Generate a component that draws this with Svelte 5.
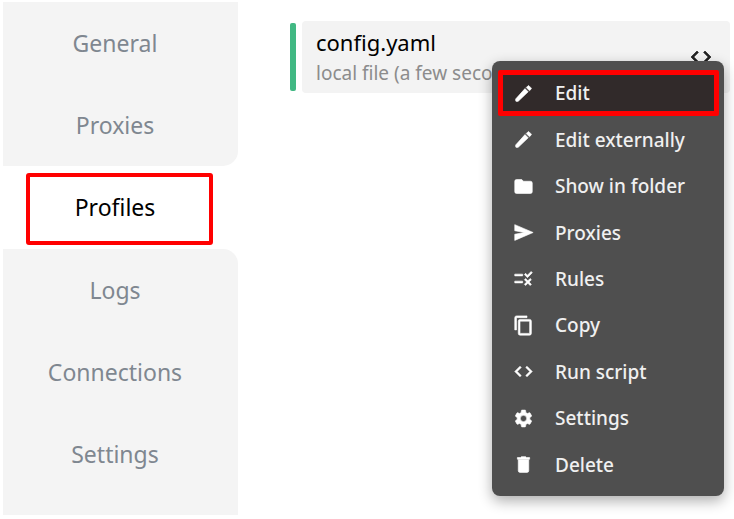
<script>
  const pages = ['General', 'Proxies', 'Profiles', 'Logs', 'Connections', 'Settings'];
  let current = $state('Profiles');

  const pencil =
    'M3.500 17.800a1 1 0 0 0-.5.9V20a1 1 0 0 0 1 1h1.300a1.500 1.500 0 0 0 1-.4L17.400 10.100l-3.700-3.700zM20.700 7a1 1 0 0 0 0-1.400l-2.300-2.300a1 1 0 0 0-1.400 0l-1.900 1.900 3.700 3.700z';
  const code =
    'M9.4 16.6 4.8 12l4.6-4.6L8 6l-6 6 6 6zM14.6 16.6l4.6-4.6-4.6-4.6L16 6l6 6-6 6z';

  const actions = [
    { label: 'Edit', icon: pencil },
    { label: 'Edit externally', icon: pencil },
    {
      label: 'Show in folder',
      icon: 'M10 4H4a2 2 0 0 0-2 2v12a2 2 0 0 0 2 2h16a2 2 0 0 0 2-2V8a2 2 0 0 0-2-2h-8z'
    },
    { label: 'Proxies', icon: 'M2 21 23 12 2 3v7l11 2-11 2z' },
    {
      label: 'Rules',
      icon: 'M16.5 11 13 7.5l1.4-1.4 2.1 2.1L20.7 4l1.4 1.4zM11 7H2v2h9zM21 13.4 19.6 12 17 14.6 14.4 12 13 13.4l2.6 2.6-2.6 2.6 1.4 1.4 2.6-2.6 2.6 2.6 1.4-1.4-2.6-2.6zM11 15H2v2h9z'
    },
    {
      label: 'Copy',
      icon: 'M16 1H4a2 2 0 0 0-2 2v14h2V3h12zM19 5H8a2 2 0 0 0-2 2v14a2 2 0 0 0 2 2h11a2 2 0 0 0 2-2V7a2 2 0 0 0-2-2zm0 16H8V7h11z'
    },
    { label: 'Run script', icon: code },
    {
      label: 'Settings',
      icon: 'M19.14 12.94c.04-.3.06-.61.06-.94s-.02-.64-.07-.94l2.03-1.58a.5.5 0 0 0 .12-.61l-1.92-3.32a.49.49 0 0 0-.59-.22l-2.39.96a7 7 0 0 0-1.62-.94l-.36-2.54A.48.48 0 0 0 13.92 2.4h-3.84a.48.48 0 0 0-.47.41l-.36 2.54c-.59.24-1.13.57-1.62.94l-2.39-.96a.48.48 0 0 0-.59.22L2.74 8.87a.47.47 0 0 0 .12.61l2.03 1.58c-.05.3-.09.63-.09.94s.02.64.07.94l-2.03 1.58a.5.5 0 0 0-.12.61l1.92 3.32c.12.22.37.29.59.22l2.39-.96c.5.38 1.03.7 1.62.94l.36 2.54c.05.24.24.41.48.41h3.84c.24 0 .44-.17.47-.41l.36-2.54a6.6 6.6 0 0 0 1.62-.94l2.39.96c.22.08.47 0 .59-.22l1.92-3.32a.47.47 0 0 0-.12-.61zM12 15.6a3.6 3.6 0 1 1 0-7.2 3.6 3.6 0 0 1 0 7.2z'
    },
    {
      label: 'Delete',
      icon: 'M6 19a2 2 0 0 0 2 2h8a2 2 0 0 0 2-2V6.500H6zM19 4h-3.500l-1-1h-5l-1 1H5v2h14z'
    }
  ];
</script>

<div class="app">
  <nav aria-label="Main">
    {#each pages as page}
      <a
        href="#{page.toLowerCase()}"
        class:active={page === current}
        aria-current={page === current ? 'page' : undefined}
        onclick={() => (current = page)}>{page}</a>
    {/each}
    <div class="rest"></div>
  </nav>

  <main>
    <div class="profile">
      <span class="mark"></span>
      <article>
        <div class="info">
          <h2>config.yaml</h2>
          <p>local file (a few seconds ago)</p>
        </div>
        <button class="code" aria-label="Actions">
          <svg viewBox="0 0 24 24"><path d={code} /></svg>
        </button>
      </article>
      <div class="menu" role="menu">
        {#each actions as action, i}
          <button role="menuitem" class:selected={i === 0}>
            <svg viewBox="0 0 24 24"><path d={action.icon} /></svg>
            {action.label}
          </button>
        {/each}
      </div>
    </div>
  </main>
</div>

<style>
  :global(body) {
    background: #fff;
  }

  .app {
    display: flex;
    box-sizing: border-box;
    min-height: 100vh;
    padding: 2px 4px 4px 3px;
    font-family: 'Noto Sans', 'Open Sans', sans-serif;
    overflow: hidden;
  }

  nav {
    display: flex;
    flex-direction: column;
    flex: none;
    width: 235px;
  }

  nav a {
    position: relative;
    display: flex;
    flex: 1;
    align-items: center;
    justify-content: center;
    padding-right: 11px;
    background: #f4f4f4;
    color: #7f8790;
    font-size: 23px;
    line-height: 32px;
    text-decoration: none;
  }

  nav a.active {
    background: #fff;
    color: #000;
  }

  nav a.active::after {
    content: '';
    position: absolute;
    inset: 7px 25px 4px 23px;
    border: 4px solid #f00;
    border-radius: 3px;
  }

  nav a:has(+ .active) {
    border-bottom-right-radius: 15px;
  }

  nav .active + a {
    border-top-right-radius: 15px;
  }

  .rest {
    height: 20px;
    background: #f4f4f4;
  }

  main {
    flex: 1;
    min-width: 0;
    padding: 19px 0 0 52px;
  }

  .profile {
    position: relative;
    display: flex;
    align-items: center;
    gap: 6px;
  }

  .mark {
    width: 6px;
    height: 68px;
    border-radius: 2px;
    background: #41b883;
  }

  article {
    display: flex;
    flex: 1;
    align-items: center;
    min-width: 0;
    height: 72px;
    padding: 0 17px 0 14px;
    border-radius: 4px;
    background: #f3f3f3;
  }

  .info {
    flex: 1;
    min-width: 0;
  }

  h2,
  p {
    margin: 0;
    font-weight: 400;
    white-space: nowrap;
  }

  h2 {
    color: #000;
    font-size: 22px;
    line-height: 32px;
  }

  p {
    color: #8c8c8c;
    font-size: 19px;
    line-height: 30px;
  }

  button {
    border: 0;
    background: none;
    font-family: inherit;
  }

  svg {
    display: block;
    flex: none;
    fill: currentColor;
    stroke: currentColor;
    stroke-width: 0.7;
  }

  .code {
    padding: 0;
    color: #222;
  }

  .code svg {
    width: 24px;
    height: 24px;
  }

  .menu {
    position: absolute;
    top: 40px;
    right: 6px;
    display: flex;
    flex-direction: column;
    box-sizing: border-box;
    width: 232px;
    height: 435px;
    padding: 9px 5px 8px 6px;
    border-radius: 8px;
    background: #4f4f4f;
    box-shadow: 0 5px 14px rgba(0, 0, 0, 0.32);
  }

  .menu button {
    display: flex;
    flex: 1;
    align-items: center;
    gap: 21px;
    box-sizing: border-box;
    padding: 0 10px;
    border: 5px solid transparent;
    border-radius: 2px;
    color: #f0f0f0;
    font-size: 19px;
    font-weight: 500;
    line-height: 28px;
    white-space: nowrap;
  }

  .menu button.selected {
    border-color: #f00;
    background: #312a2a;
  }

  .menu svg {
    width: 21px;
    height: 21px;
    color: #fff;
  }
</style>
